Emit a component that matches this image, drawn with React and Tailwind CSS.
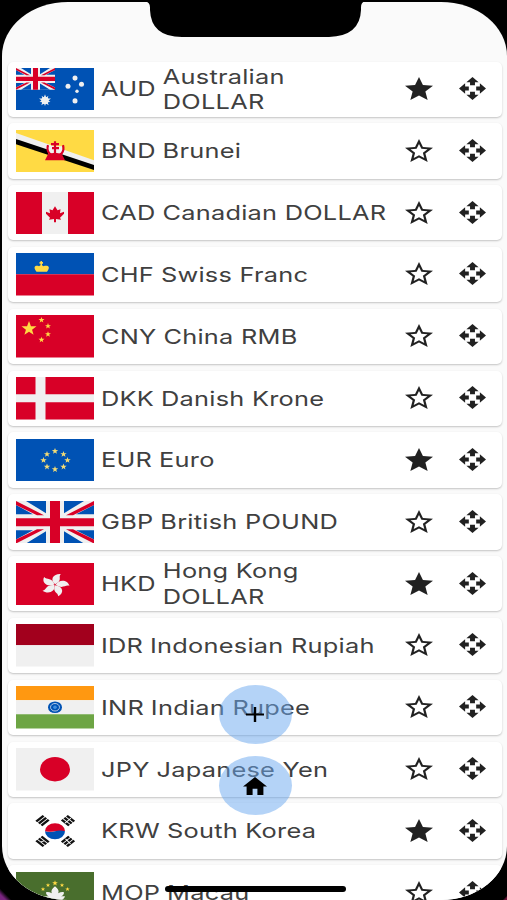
const currencies = [
  { code: 'AUD', name: 'Australian DOLLAR', wrap: true, fav: true },
  { code: 'BND', name: 'Brunei' },
  { code: 'CAD', name: 'Canadian DOLLAR' },
  { code: 'CHF', name: 'Swiss Franc' },
  { code: 'CNY', name: 'China RMB' },
  { code: 'DKK', name: 'Danish Krone' },
  { code: 'EUR', name: 'Euro', fav: true },
  { code: 'GBP', name: 'British POUND' },
  { code: 'HKD', name: 'Hong Kong DOLLAR', wrap: true, fav: true },
  { code: 'IDR', name: 'Indonesian Rupiah' },
  { code: 'INR', name: 'Indian Rupee' },
  { code: 'JPY', name: 'Japanese Yen' },
  { code: 'KRW', name: 'South Korea', fav: true },
  { code: 'MOP', name: 'Macau' },
]

const RED = '#d80027'
const BLUE = '#0052b4'

const starPath = 'M0-1 .26-.32 1-.31.41.13.61.81 0 .4-.61.81-.41.13-1-.31-.26-.32z'

function Star({ x, y, r, fill }) {
  return <path d={starPath} transform={`translate(${x} ${y}) scale(${r} ${r})`} fill={fill} />
}

function UnionJack() {
  return (
    <>
      <path fill="#f0f0f0" d="M0 0h78v42H0z" />
      <path fill={BLUE} d="M10 0H30V12zM48 0H68L48 12zM0 4V13H17zM78 4V13H60zM0 29H17L0 38zM78 29H60L78 38zM10 42H30V30zM48 42H68L48 30z" />
      <path fill={RED} d="M34 0h10v42H34zM0 17h78v8H0zM0 0l28 14h-7L0 4zM78 0 50 14h7l21-10zM0 42l28-14h-7L0 38zM78 42 50 28h7l21 10z" />
    </>
  )
}

const trigram = (x, y, turn) => (
  <g transform={`translate(${x} ${y}) scale(1.17 .9) rotate(${turn})`} fill="#111">
    <path d="M-4.4-4.2h8.8v2.200h-8.8zM-4.4-1.100h8.8v2.200h-8.8zM-4.4 2h8.8v2.200h-8.8z" />
  </g>
)

const flags = {
  AUD: (
    <>
      <path fill={BLUE} d="M0 0h78v42H0z" />
      <g transform="scale(.5 .51)">
        <UnionJack />
      </g>
      <Star x={29} y={32} r={6} fill="#f0f0f0" />
      <g transform="rotate(180 29 32)">
        <Star x={29} y={32} r={5.5} fill="#f0f0f0" />
      </g>
      <circle cx="29" cy="32" r="3.600" fill="#f0f0f0" />
      <g fill="#f0f0f0">
        <circle cx="59" cy="10" r="2.500" />
        <circle cx="52" cy="18" r="2.500" />
        <circle cx="65.500" cy="16" r="2.500" />
        <circle cx="61" cy="23" r="1.700" />
        <circle cx="59" cy="32.500" r="2.500" />
      </g>
    </>
  ),
  BND: (
    <>
      <path fill="#ffda44" d="M0 0h78v42H0z" />
      <path fill="#f0f0f0" d="M0 3 78 30v6L0 11z" />
      <path fill="#000" d="M0 9 78 34.500v5L0 14z" />
      <path fill="#f0f0f0" d="M32 16h14v8H32z" />
      <g fill="none" stroke={RED} strokeWidth="2.200">
        <path d="M32 15c-4 14 19 14 15 0M39 11v15M35 14h8M36 18h7" />
      </g>
      <path fill={RED} d="M32 24q7-3 14 0l3 6H29z" />
    </>
  ),
  CAD: (
    <>
      <path fill="#f0f0f0" d="M0 0h78v42H0z" />
      <path fill={RED} d="M0 0h26v42H0zM52 0h26v42H52zM39 14l2.500 4 3-1-.5 4 4-1.500v2l-4 4 1 2-5-.8V30h-2v-3.300l-5 .8 1-2-4-4v-2l4 1.500-.5-4 3 1z" />
    </>
  ),
  CHF: (
    <>
      <path fill={BLUE} d="M0 0h78v21H0z" />
      <path fill={RED} d="M0 21h78v21H0z" />
      <path fill="#ffda44" d="M20.500 18.500c-4-5-1-6.500 2.500-5.500l1.500-1V10.500h-1V9h1V8h1.500v1h1v1.500h-1V12l1.500 1c4.500-1 7.500.5 3.500 5.500z" />
    </>
  ),
  CNY: (
    <>
      <path fill={RED} d="M0 0h78v42H0z" />
      <Star x={13} y={13.5} r={7.5} fill="#ffda44" />
      <Star x={25.5} y={5} r={3} fill="#ffda44" />
      <Star x={32} y={11} r={3} fill="#ffda44" />
      <Star x={32} y={19} r={3} fill="#ffda44" />
      <Star x={25.5} y={24.5} r={3} fill="#ffda44" />
    </>
  ),
  DKK: (
    <>
      <path fill="#f0f0f0" d="M0 0h78v42H0z" />
      <path fill={RED} d="M0 0h19.500v17H0zM29.500 0H78v17H29.500zM0 25h19.500v17H0zM29.500 25H78v17H29.500z" />
    </>
  ),
  EUR: (
    <>
      <path fill={BLUE} d="M0 0h78v42H0z" />
      {[[39, 12], [47.5, 15], [51.5, 21], [47.5, 27.5], [39, 30], [31, 27.5], [27.5, 21], [31, 15]].map(([x, y]) => (
        <Star key={`${x}-${y}`} x={x} y={y} r={3.2} fill="#f4dc75" />
      ))}
    </>
  ),
  GBP: <UnionJack />,
  HKD: (
    <>
      <path fill={RED} d="M0 0h78v42H0z" />
      <g transform="translate(39 21.500) scale(1.250 1)" fill="#f0f0f0">
        {[16, 88, 160, 232, 304].map((a) => (
          <path key={a} transform={`rotate(${a})`} d="M0-.5C-6-4-4-10.500 1.500-11.500 0-8 5-6 0-.5z" />
        ))}
      </g>
    </>
  ),
  IDR: (
    <>
      <path fill="#a2001d" d="M0 0h78v21H0z" />
      <path fill="#f0f0f0" d="M0 21h78v21H0z" />
    </>
  ),
  INR: (
    <>
      <path fill="#ff9811" d="M0 0h78v14H0z" />
      <path fill="#f0f0f0" d="M0 14h78v14H0z" />
      <path fill="#6da544" d="M0 28h78v14H0z" />
      <ellipse cx="39" cy="21" rx="7" ry="5.800" fill={BLUE} />
      <ellipse cx="39" cy="21" rx="4.500" ry="3.700" fill="none" stroke="#c5d5ea" strokeWidth=".9" />
      <circle cx="39" cy="21" r="1.800" fill="#3f8fe0" />
    </>
  ),
  JPY: (
    <>
      <path fill="#f0f0f0" d="M0 0h78v42H0z" />
      <ellipse cx="39" cy="21" rx="15" ry="12" fill={RED} />
    </>
  ),
  KRW: (
    <>
      <path fill="#fff" d="M0 0h78v42H0z" />
      <path fill={RED} d="M29 21a10 8 0 0 1 20 0z" />
      <path fill={BLUE} d="M29 21a10 8 0 0 0 20 0q-5-1.500-10 0t-10 0z" />
      <path fill={RED} d="M29 21q5 1.500 10 0z" />
      {trigram(26.5, 10.5, -45)}
      {trigram(52, 10.5, 45)}
      {trigram(26.5, 31, 45)}
      {trigram(52, 31, -45)}
      <path stroke="#fff" strokeWidth="1" d="m49 13 6-5M49.500 28.500l5 5M25 31.500l3-1" />
    </>
  ),
  MOP: (
    <>
      <path fill="#496e2d" d="M0 0h78v42H0z" />
      <Star x={39} y={11} r={2.8} fill="#ffda44" />
      <Star x={32} y={13} r={2.2} fill="#ffda44" />
      <Star x={46} y={13} r={2.2} fill="#ffda44" />
      <Star x={27} y={17} r={2.2} fill="#ffda44" />
      <Star x={51.5} y={17} r={2.2} fill="#ffda44" />
      <path fill="#f0f0f0" d="M39 14q5 4 3 7 4-2 6-1 0 3-3 4h4q-1 5-10 5t-10-5h4q-3-1-3-4 2-1 6 1-2-3 3-7z" />
    </>
  ),
}

function Flag({ code }) {
  return (
    <svg viewBox="0 0 78 42" preserveAspectRatio="none" className="w-[78px] h-[42.500px] shrink-0 overflow-hidden">
      {flags[code]}
    </svg>
  )
}

function FavIcon({ filled }) {
  return (
    <svg viewBox="2 2 20 19" preserveAspectRatio="none" className="w-[28px] h-[23px] shrink-0" fill="#212121">
      {filled ? (
        <path d="M12 17.270 18.180 21l-1.640-7.030L22 9.240l-7.190-.61L12 2 9.190 8.630 2 9.240l5.460 4.730L5.820 21z" />
      ) : (
        <path d="m22 9.240-7.190-.62L12 2 9.190 8.630 2 9.240l5.460 4.730L5.820 21 12 17.270 18.180 21l-1.630-7.030L22 9.240zM12 15.400l-3.760 2.270 1-4.280-3.320-2.880 4.380-.38L12 6.100l1.710 4.040 4.380.38-3.320 2.880 1 4.280L12 15.400z" />
      )}
    </svg>
  )
}

function MoveIcon() {
  return (
    <svg viewBox="1 1 22 22" preserveAspectRatio="none" className="w-[27px] h-[23px] shrink-0" fill="#212121">
      <path d="M10 9h4V6h3l-5-5-5 5h3v3zm-1 1H6V7l-5 5 5 5v-3h3v-4zm14 2-5-5v3h-3v4h3v3l5-5zm-9 3h-4v3H7l5 5 5-5h-3v-3z" />
    </svg>
  )
}

function CurrencyRow({ item }) {
  return (
    <li className="flex h-[55.330px] shrink-0 items-center rounded-[5px] bg-white pl-[7.500px] pr-4 shadow-[0_1px_2px_rgba(0,0,0,0.22)]">
      <Flag code={item.code} />
      <div className="ml-[7px] flex min-w-0 flex-1">
        <div className="flex origin-left scale-x-[1.250] items-center gap-[5.500px] whitespace-nowrap text-[20.300px] leading-[25.500px] tracking-[0.200px] text-[#404040]">
          <span>{item.code}</span>
          <span className={item.wrap ? 'w-[130px] whitespace-normal' : ''}>{item.name}</span>
        </div>
      </div>
      <div className="flex items-center gap-[26px] pb-[1.500px]">
        <FavIcon filled={item.fav} />
        <MoveIcon />
      </div>
    </li>
  )
}

function App() {
  return (
    <div className="relative h-[900px] w-[507px] overflow-hidden bg-black font-['Inter','Liberation_Sans',sans-serif]">
      {/* wallpaper showing behind the device corners */}
      <div className="absolute bottom-0 left-0 h-3 w-4 bg-[linear-gradient(45deg,#7a2580_20%,#000_42%)]" />
      <div className="absolute bottom-0 right-0 h-1 w-1 bg-[linear-gradient(-45deg,#6b1238_30%,#000_60%)]" />

      <div className="ml-[2px] h-full w-[505px] pt-[2px]">
        <div className="h-[898px] overflow-hidden rounded-[66px/54px] bg-[#fafafa] pt-[59.500px]">
          <ul className="ml-[6px] flex w-[494px] flex-col gap-[6.500px]">
            {currencies.map((item) => (
              <CurrencyRow key={item.code} item={item} />
            ))}
          </ul>
        </div>
      </div>

      {/* notch */}
      <svg viewBox="0 0 220 38" className="absolute left-[145px] top-0 h-[38px] w-[220px]">
        <path d="M0 0v1.500q5 .5 5 6V10q1 27 32 27h147q31-1 32-27V7.500q0-5.500 4-6V0z" />
      </svg>

      {/* floating buttons */}
      <div className="absolute left-[218.500px] top-[685px] flex flex-col gap-[12px]">
        <button className="flex h-[59px] w-[73px] items-center justify-center rounded-[50%] bg-[#6aa8f0]/50">
          <svg viewBox="0 0 18 15" className="h-[15px] w-[18px]">
            <path d="M0 6.500h7.800V0h2.400v6.500H18v2h-7.800V15H7.800V8.500H0z" />
          </svg>
        </button>
        <button className="flex h-[59px] w-[73px] items-center justify-center rounded-[50%] bg-[#6aa8f0]/50">
          <svg viewBox="2 3 20 17" preserveAspectRatio="none" className="h-[18px] w-[24px]">
            <path d="M10 20v-6h4v6h5v-8h3L12 3 2 12h3v8z" />
          </svg>
        </button>
      </div>

      {/* home indicator */}
      <div className="absolute left-[165px] top-[886px] h-[6px] w-[181px] rounded-full bg-black" />
    </div>
  )
}

export default App
